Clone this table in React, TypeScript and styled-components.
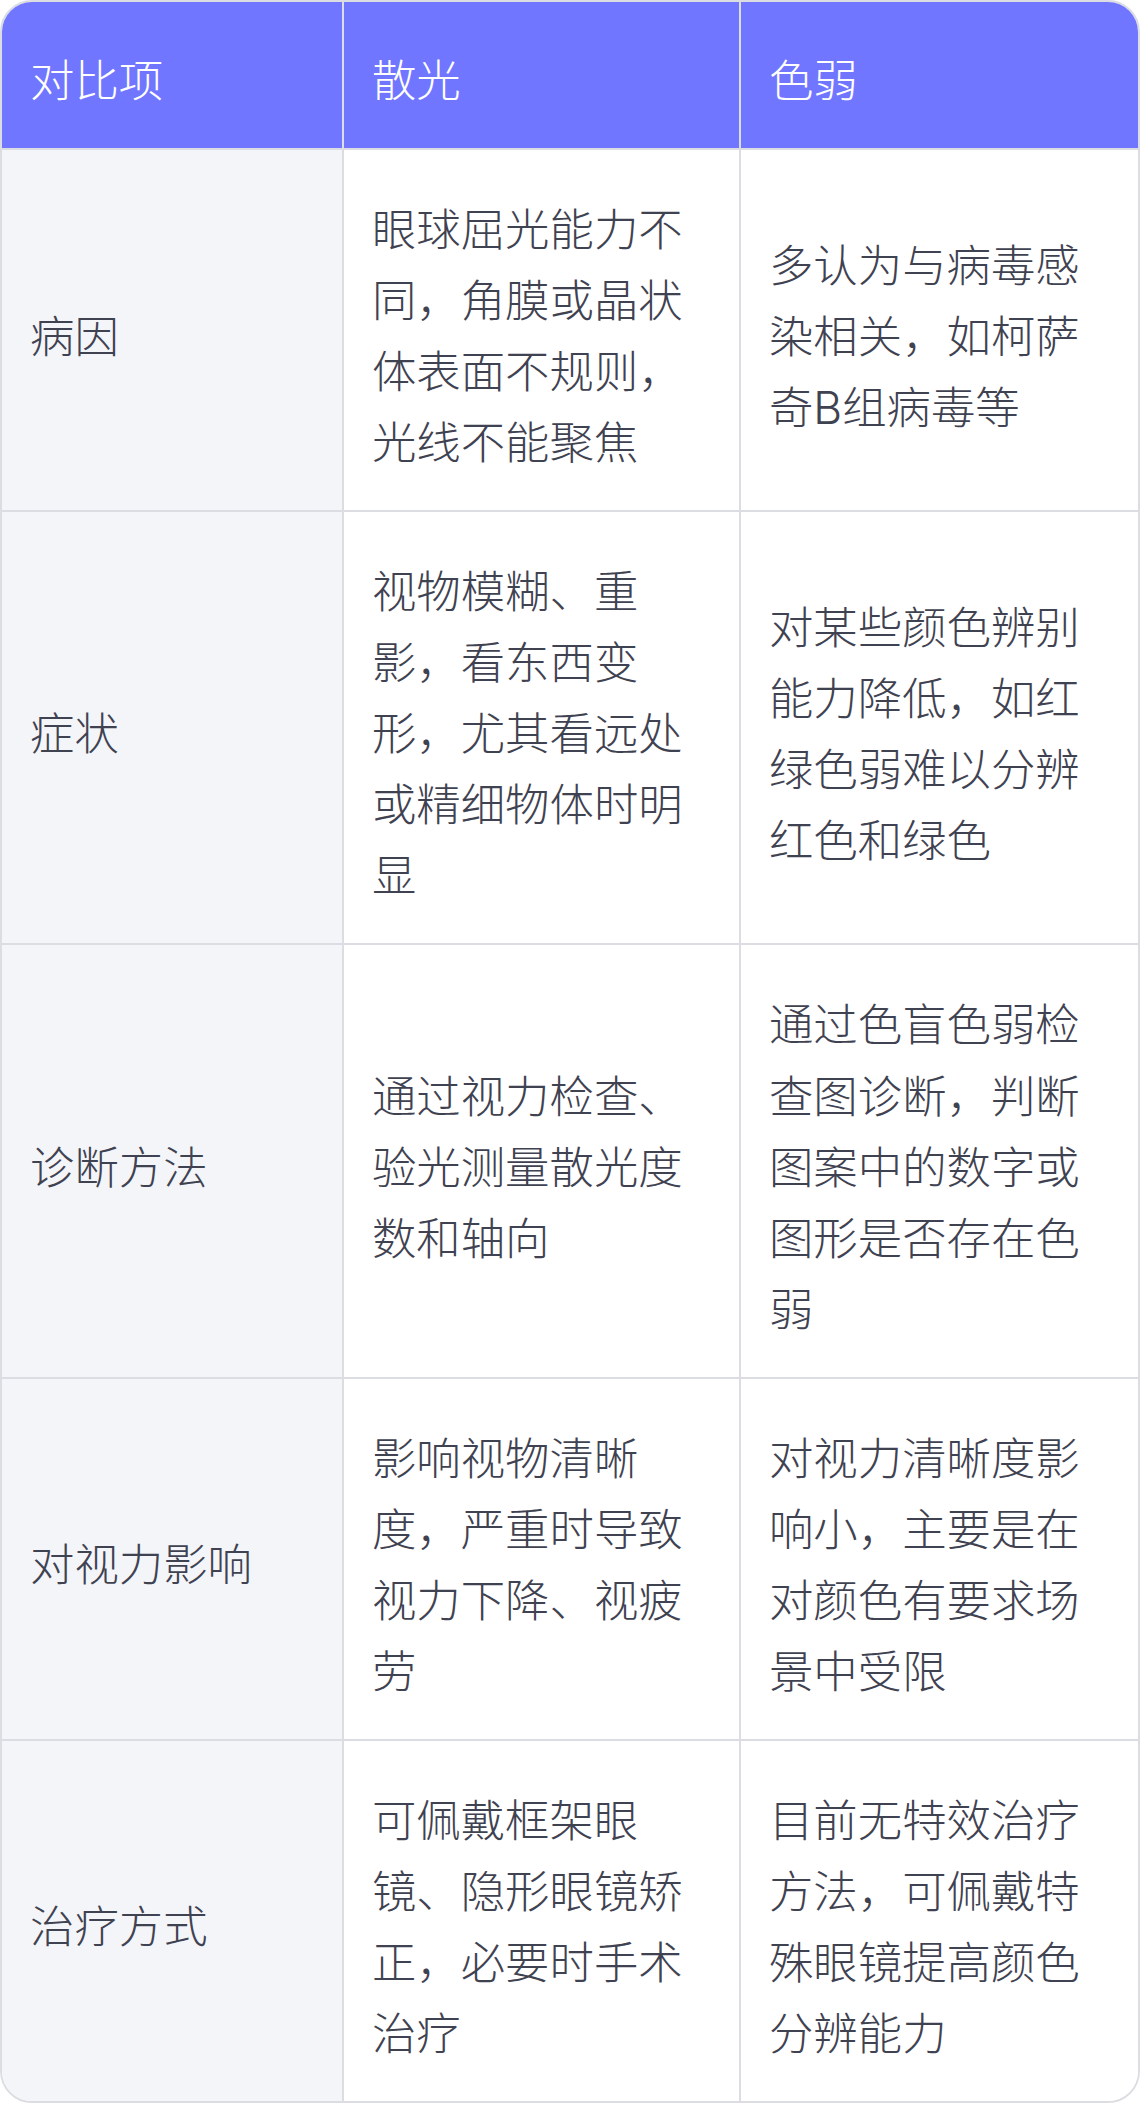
import React from "react";
import styled, { createGlobalStyle } from "styled-components";

const GlobalStyle = createGlobalStyle`
  html, body {
    margin: 0;
    padding: 0;
    background: #ffffff;
  }

  body {
    font-family: "Inter", "Noto Sans CJK SC", sans-serif;
    -webkit-font-smoothing: antialiased;
  }
`;

const Wrapper = styled.div`
  width: 1140px;
  box-sizing: border-box;
  border: solid 2px #dcdde2;
  border-radius: 32px;
  overflow: hidden;
  background: #ffffff;
`;

const Table = styled.table`
  width: 100%;
  table-layout: fixed;
  border-collapse: separate;
  border-spacing: 0;
  font-size: 44.4px;
  font-weight: 300;
  line-height: 1.6;

  tr:last-child td {
    border-bottom: none;
  }
`;

const HeadCell = styled.th`
  padding: 44px 28px 31px;
  background: #7076ff;
  color: #ffffff;
  font-weight: 300;
  text-align: left;
  border-right: solid 2px #dcdde2;
  border-bottom: solid 2px #dcdde2;

  &:last-child {
    border-right: none;
  }
`;

const Cell = styled.td<{ $label?: boolean }>`
  padding: 45px 28px 31px;
  vertical-align: middle;
  color: #3f4251;
  background: ${(p) => (p.$label ? "#f4f5f9" : "#ffffff")};
  border-right: solid 2px #dcdde2;
  border-bottom: solid 2px #dcdde2;
  word-break: break-all;

  &:last-child {
    border-right: none;
  }
`;

const rows = [
  {
    label: "病因",
    astigmatism: "眼球屈光能力不同，角膜或晶状体表面不规则，光线不能聚焦",
    weakness: "多认为与病毒感染相关，如柯萨奇B组病毒等",
  },
  {
    label: "症状",
    astigmatism: "视物模糊、重影，看东西变形，尤其看远处或精细物体时明显",
    weakness: "对某些颜色辨别能力降低，如红绿色弱难以分辨红色和绿色",
  },
  {
    label: "诊断方法",
    astigmatism: "通过视力检查、验光测量散光度数和轴向",
    weakness: "通过色盲色弱检查图诊断，判断图案中的数字或图形是否存在色弱",
  },
  {
    label: "对视力影响",
    astigmatism: "影响视物清晰度，严重时导致视力下降、视疲劳",
    weakness: "对视力清晰度影响小，主要是在对颜色有要求场景中受限",
  },
  {
    label: "治疗方式",
    astigmatism: "可佩戴框架眼镜、隐形眼镜矫正，必要时手术治疗",
    weakness: "目前无特效治疗方法，可佩戴特殊眼镜提高颜色分辨能力",
  },
];

const App = () => {
  return (
    <>
      <GlobalStyle />
      <Wrapper>
        <Table>
          <colgroup>
            <col style={{ width: "30.1%" }} />
            <col style={{ width: "34.95%" }} />
            <col style={{ width: "34.95%" }} />
          </colgroup>
          <thead>
            <tr>
              <HeadCell>对比项</HeadCell>
              <HeadCell>散光</HeadCell>
              <HeadCell>色弱</HeadCell>
            </tr>
          </thead>
          <tbody>
            {rows.map((row) => (
              <tr key={row.label}>
                <Cell $label>{row.label}</Cell>
                <Cell>{row.astigmatism}</Cell>
                <Cell>{row.weakness}</Cell>
              </tr>
            ))}
          </tbody>
        </Table>
      </Wrapper>
    </>
  );
};

export default App;
